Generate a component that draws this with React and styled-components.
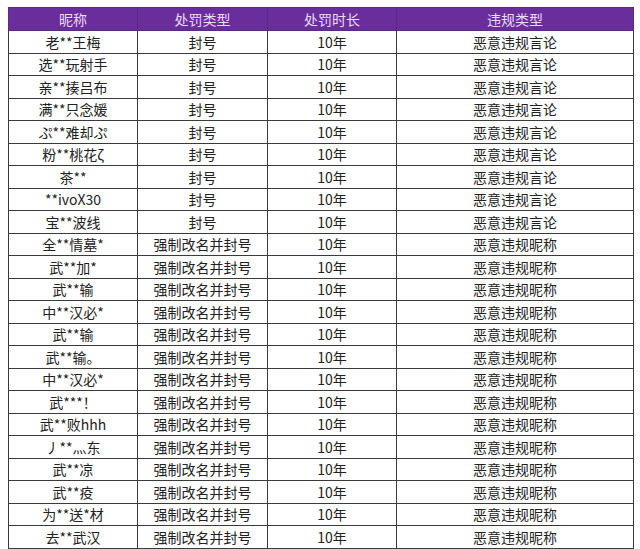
import React from 'react';
import styled, { createGlobalStyle } from 'styled-components';

const GlobalStyle = createGlobalStyle`
  body {
    margin: 0;
    background: #fff;
    font-family: "Noto Sans CJK SC", "Noto Sans", sans-serif;
  }
`;

const Page = styled.div`
  padding: 7px 8px 0 8px;
`;

const Table = styled.table`
  width: 625px;
  border-collapse: collapse;
  table-layout: fixed;
  font-size: 14px;
  color: #222;
`;

const HeadCell = styled.th`
  height: 22px;
  padding: 0;
  background: #6a2e9c;
  color: #eadcf7;
  font-weight: normal;
  text-align: center;
  border: 1px solid #5a2a80;
  border-left-color: ${p => (p.$first ? '#5a2a80' : '#9a7bb8')};
  line-height: 20px;
`;

const Cell = styled.td`
  height: 21.5px;
  padding: 0;
  text-align: center;
  border: 1px solid #3a3a3a;
  line-height: 20px;
  white-space: nowrap;
`;

const banned = ['老**王梅', '选**玩射手', '亲**揍吕布', '满**只念媛', 'ぷ**难却ぷ', '粉**桃花ζ', '茶**', '**ivoX30', '宝**波线'];
const renamed = ['全**情墓*', '武**加*', '武**输', '中**汉必*', '武**输', '武**输。', '中**汉必*', '武***！', '武**败hhh', '丿**灬东', '武**凉', '武**疫', '为**送*材', '去**武汉'];

const rows = [
  ...banned.map(name => ({ name, type: '封号', reason: '恶意违规言论' })),
  ...renamed.map(name => ({ name, type: '强制改名并封号', reason: '恶意违规昵称' })),
];

export default function App() {
  return (
    <Page>
      <GlobalStyle />
      <Table>
        <colgroup>
          <col style={{ width: 129 }} />
          <col style={{ width: 130 }} />
          <col style={{ width: 129 }} />
          <col style={{ width: 237 }} />
        </colgroup>
        <thead>
          <tr>
            <HeadCell $first>昵称</HeadCell>
            <HeadCell>处罚类型</HeadCell>
            <HeadCell>处罚时长</HeadCell>
            <HeadCell>违规类型</HeadCell>
          </tr>
        </thead>
        <tbody>
          {rows.map((r, i) => (
            <tr key={i}>
              <Cell>{r.name}</Cell>
              <Cell>{r.type}</Cell>
              <Cell>10年</Cell>
              <Cell>{r.reason}</Cell>
            </tr>
          ))}
        </tbody>
      </Table>
    </Page>
  );
}
